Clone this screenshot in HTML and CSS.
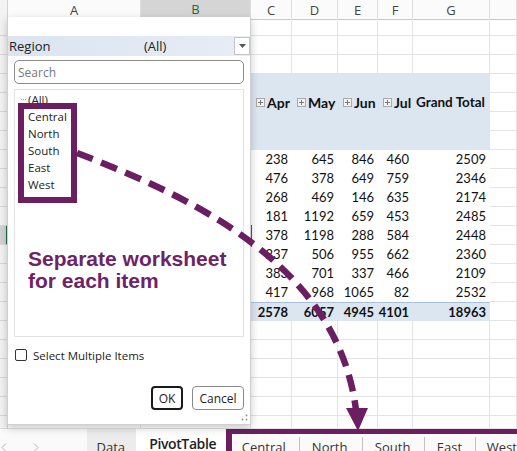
FILE: index.html
```html
<!DOCTYPE html>
<html>
<head>
<meta charset="utf-8">
<title>PivotTable report filter pages</title>
<link rel="stylesheet" href="styles.css">
</head>
<body>
<div class="app">
  <div class="sheet">
    <div class="row colhead">
      <i class="rh"></i><i>A</i><i class="sel">B</i><i>C</i><i>D</i><i>E</i><i>F</i><i>G</i><i></i>
    </div>
    <div class="row"><i class="rh"></i><i></i><i></i><i></i><i></i><i></i><i></i><i></i><i></i></div>
    <div class="row"><i class="rh"></i><i></i><i></i><i></i><i></i><i></i><i></i><i></i><i></i></div>
    <div class="row"><i class="rh"></i><i></i><i></i><i></i><i></i><i></i><i></i><i></i><i></i></div>

    <div class="row"><i class="rh"></i><i></i><i></i><i class="bd"></i><i class="bd"></i><i class="bd"></i><i class="bd"></i><i class="bd"></i><i></i></div>
    <div class="row">
      <i class="rh"></i><i></i><i></i>
      <b class="bd hd"><svg class="pl" viewBox="0 0 9 9"><rect x="0.5" y="0.5" width="8" height="8"/><path d="M2 4.5h5M4.5 2v5"/></svg>Apr</b>
      <b class="bd hd"><svg class="pl" viewBox="0 0 9 9"><rect x="0.5" y="0.5" width="8" height="8"/><path d="M2 4.5h5M4.5 2v5"/></svg>May</b>
      <b class="bd hd"><svg class="pl" viewBox="0 0 9 9"><rect x="0.5" y="0.5" width="8" height="8"/><path d="M2 4.5h5M4.5 2v5"/></svg>Jun</b>
      <b class="bd hd"><svg class="pl" viewBox="0 0 9 9"><rect x="0.5" y="0.5" width="8" height="8"/><path d="M2 4.5h5M4.5 2v5"/></svg>Jul</b>
      <b class="bd hd gt">Grand Total</b>
      <i></i>
    </div>
    <div class="row"><i class="rh"></i><i></i><i></i><i class="bd"></i><i class="bd"></i><i class="bd"></i><i class="bd"></i><i class="bd"></i><i></i></div>
    <div class="row"><i class="rh"></i><i></i><i></i><i class="bd"></i><i class="bd"></i><i class="bd"></i><i class="bd"></i><i class="bd"></i><i></i></div>

    <div class="row"><i class="rh"></i><i></i><i></i><i class="p">238</i><i class="p">645</i><i class="p">846</i><i class="p">460</i><i class="p">2509</i><i></i></div>
    <div class="row"><i class="rh"></i><i></i><i></i><i class="p">476</i><i class="p">378</i><i class="p">649</i><i class="p">759</i><i class="p">2346</i><i></i></div>
    <div class="row"><i class="rh"></i><i></i><i></i><i class="p">268</i><i class="p">469</i><i class="p">146</i><i class="p">635</i><i class="p">2174</i><i></i></div>
    <div class="row"><i class="rh"></i><i></i><i></i><i class="p">181</i><i class="p">1192</i><i class="p">659</i><i class="p">453</i><i class="p">2485</i><i></i></div>
    <div class="row"><i class="rh on"></i><i></i><i></i><i class="p">378</i><i class="p">1198</i><i class="p">288</i><i class="p">584</i><i class="p">2448</i><i></i></div>
    <div class="row"><i class="rh"></i><i></i><i></i><i class="p">237</i><i class="p">506</i><i class="p">955</i><i class="p">662</i><i class="p">2360</i><i></i></div>
    <div class="row"><i class="rh"></i><i></i><i></i><i class="p">383</i><i class="p">701</i><i class="p">337</i><i class="p">466</i><i class="p">2109</i><i></i></div>
    <div class="row"><i class="rh"></i><i></i><i></i><i class="p">417</i><i class="p">968</i><i class="p">1065</i><i class="p">82</i><i class="p">2532</i><i></i></div>
    <div class="row"><i class="rh"></i><i></i><i></i><b class="t">2578</b><b class="t">6057</b><b class="t">4945</b><b class="t">4101</b><b class="t">18963</b><i></i></div>

    <div class="row"><i class="rh"></i><i></i><i></i><i></i><i></i><i></i><i></i><i></i><i></i></div>
    <div class="row"><i class="rh"></i><i></i><i></i><i></i><i></i><i></i><i></i><i></i><i></i></div>
    <div class="row"><i class="rh"></i><i></i><i></i><i></i><i></i><i></i><i></i><i></i><i></i></div>
    <div class="row"><i class="rh"></i><i></i><i></i><i></i><i></i><i></i><i></i><i></i><i></i></div>
    <div class="row"><i class="rh"></i><i></i><i></i><i></i><i></i><i></i><i></i><i></i><i></i></div>
    <div class="row short"><i class="rh"></i><i></i><i></i><i></i><i></i><i></i><i></i><i></i><i></i></div>
  </div>

  <div class="tabs">
    <div class="nav">
      <svg class="chev" viewBox="0 0 6 9"><path d="M5 0.5L1 4.5L5 8.5"/></svg>
      <svg class="chev" viewBox="0 0 6 9"><path d="M1 0.5L5 4.5L1 8.5"/></svg>
    </div>
    <div class="tab data">Data</div>
    <div class="tab active">PivotTable</div>
    <div class="group">
      <div class="tab g1">Central</div>
      <div class="tab g2 sep">North</div>
      <div class="tab g3 sep">South</div>
      <div class="tab g4 sep">East</div>
      <div class="tab g5 sep">West</div>
    </div>
  </div>

  <div class="cursor"></div>

  <div class="dialog">
    <div class="field">
      <span class="fname">Region</span>
      <span class="fval">(All)</span>
      <span class="drop"><svg viewBox="0 0 7 4"><path d="M0 0h7L3.5 4z"/></svg></span>
    </div>
    <div class="search">Search</div>
    <div class="list">
      <div class="item first">(All)</div>
      <div class="item">Central</div>
      <div class="item">North</div>
      <div class="item">South</div>
      <div class="item">East</div>
      <div class="item">West</div>
    </div>
    <label class="check"><span class="box"></span>Select Multiple Items</label>
    <div class="buttons">
      <span class="btn ok">OK</span>
      <span class="btn cancel">Cancel</span>
    </div>
    <svg class="grip" viewBox="0 0 7 7"><circle cx="5.5" cy="1.5" r="0.9"/><circle cx="5.5" cy="5.5" r="0.9"/><circle cx="1.5" cy="5.5" r="0.9"/></svg>
  </div>

  <div class="hl"></div>
  <div class="note">Separate worksheet<br>for each item</div>

  <svg class="arrow" viewBox="0 0 517 451">
    <path class="dash" d="M77 153 C200 200 338 268 356 410"/>
    <polygon class="head" points="346,408 368,408 358,431"/>
  </svg>
</div>
</body>
</html>
```

FILE: styles.css
```css
* { box-sizing: border-box; }
html, body { margin: 0; padding: 0; }
body {
  width: 517px;
  height: 451px;
  overflow: hidden;
  background: #fff;
  font-family: Lato, "Open Sans", sans-serif;
}
.app {
  position: relative;
  width: 517px;
  height: 451px;
  overflow: hidden;
}

/* ---------- sheet grid ---------- */
.sheet { display: flex; flex-direction: column; }
.row {
  display: grid;
  grid-template-columns: 8px 133px 110px 41px 46px 40px 35px 77px 27px;
  height: 19px;
  font-size: 13px;
  color: #111;
}
.row > * {
  font-style: normal;
  font-weight: 400;
  border-right: 1px solid #e4e4e4;
  border-bottom: 1px solid #e4e4e4;
  display: flex;
  align-items: center;
  justify-content: flex-end;
  padding-right: 3px;
  white-space: nowrap;
}
.row.short { height: 13px; }
.row > .rh {
  background: #f3f3f3;
  border-right: 1px solid #d2d2d2;
  border-bottom: 1px solid #dadada;
  padding: 0;
}
.row > .rh.on {
  background: #d3d3d3;
  border-right: 2px solid #217346;
}

.colhead { height: 17px; }
.colhead > * {
  background: #fbfbfb;
  border-right: 1px solid #dedede;
  border-bottom: 1px solid #c8c8c8;
  justify-content: center;
  padding: 0;
  font-family: "Open Sans", sans-serif;
  font-size: 13px;
  color: #444;
}
.colhead > .sel {
  background: #d5d5d5;
  border-bottom: 2px solid #217346;
  color: #1d6b40;
}

.row > .bd {
  background: #dce6f1;
  border-color: #dce6f1;
}
.row > .hd {
  justify-content: flex-start;
  padding: 0 0 0 5px;
  gap: 2px;
  font-weight: 700;
  font-size: 14px;
  color: #111;
}
.row > .gt { padding-left: 3px; font-size: 13.5px; }
.pl { width: 9px; height: 9px; flex: none; }
.pl rect { fill: #f2f2f2; stroke: #a9a9a9; stroke-width: 1; }
.pl path { stroke: #7a7a7a; stroke-width: 1; }

.row > .p {
  background: #fff;
  border-color: #fff;
}
.row > .t {
  background: #dce6f1;
  border-right-color: #dce6f1;
  border-bottom-color: #dce6f1;
  border-top: 1px solid #a8bfdf;
  font-weight: 700;
  color: #111;
}

.cursor {
  position: absolute;
  left: 250px;
  top: 225px;
  width: 2px;
  height: 22px;
  background: #217346;
}

/* ---------- sheet tabs ---------- */
.tabs {
  display: flex;
  height: 22px;
  background: #fafafa;
  font-family: "Open Sans", sans-serif;
  font-size: 13px;
  color: #333;
  line-height: 17px;
}
.nav {
  width: 87px;
  display: flex;
  align-items: flex-start;
  gap: 26px;
  padding: 14px 0 0 1px;
}
.chev { width: 6px; height: 9px; }
.chev path { fill: none; stroke: #b3b3b3; stroke-width: 1; }
.tab { white-space: nowrap; padding-top: 10px; }
.tab.data {
  width: 50px;
  background: #ececec;
  padding-left: 10px;
}
.tab.active {
  width: 90px;
  background: #fff;
  padding: 6px 0 0 13px;
  font-size: 14px;
  line-height: 18px;
  font-weight: 600;
  letter-spacing: -0.4px;
  color: #222;
}
.group {
  flex: 1;
  display: flex;
  border-top: 5px solid #6b1f62;
  border-left: 6px solid #6b1f62;
  background: #fafafa;
}
.group .tab { padding-top: 5px; padding-left: 13px; }
.group .g1 { width: 67px; padding-left: 10px; }
.group .g2 { width: 63px; }
.group .g3 { width: 62px; }
.group .g4 { width: 51px; }
.group .g5 { flex: 1; padding-left: 12px; }
.sep {
  background: linear-gradient(#c4c4c4, #c4c4c4) left 3px / 1px 100% no-repeat;
}

/* ---------- filter dropdown ---------- */
.dialog {
  position: absolute;
  left: 7px;
  top: 17px;
  width: 244px;
  height: 408px;
  background: #fff;
  border: 1px solid #d0d0d0;
  border-top: none;
  box-shadow: 0 3px 8px rgba(0, 0, 0, 0.22);
  display: flex;
  flex-direction: column;
  padding: 19px 6px 0 6px;
  font-family: "Open Sans", sans-serif;
  font-size: 11.5px;
  color: #222;
}
.field {
  margin: 0 -6px;
  height: 20px;
  display: flex;
  align-items: center;
  padding-left: 1px;
  background: linear-gradient(90deg, #dbe4f0, #e7edf6);
  font-size: 13px;
  color: #222;
}
.fname { width: 135px; }
.fval { flex: 1; }
.drop {
  width: 16px;
  height: 18px;
  background: #fff;
  border: 1px solid #c4c4c4;
  display: flex;
  align-items: center;
  justify-content: center;
}
.drop svg { width: 7px; height: 4px; }
.drop path { fill: #555; }

.search {
  margin-top: 4px;
  height: 24px;
  border: 1px solid #8c8c8c;
  border-radius: 5px;
  padding-left: 3px;
  display: flex;
  align-items: center;
  color: #777;
  font-size: 12px;
}
.list {
  margin-top: 5px;
  height: 248px;
  border: 1px solid #e2e2e2;
  padding: 1px 0 0 13px;
  line-height: 17px;
}
.item {
  display: flex;
  align-items: center;
}
.item.first::before {
  content: "";
  width: 5px;
  margin-left: -7px;
  margin-right: 2px;
  border-top: 1px dotted #9a9a9a;
}
.check {
  margin-top: 10px;
  height: 16px;
  display: flex;
  align-items: center;
  gap: 6px;
  padding-left: 1px;
}
.box {
  width: 12px;
  height: 12px;
  border: 1.5px solid #333;
  border-radius: 2px;
}
.buttons {
  margin-top: 23px;
  height: 24px;
  display: flex;
  justify-content: flex-end;
  gap: 9px;
}
.btn {
  display: flex;
  align-items: center;
  justify-content: center;
  border-radius: 4px;
  font-size: 12px;
}
.btn.ok { width: 32px; border: 2px solid #1a1a1a; }
.btn.cancel { width: 52px; border: 1px solid #8a8a8a; }
.grip {
  width: 7px;
  height: 7px;
  align-self: flex-end;
  margin: auto -4px 3px 0;
}
.grip circle { fill: #8a8a8a; }

/* ---------- annotation ---------- */
.hl {
  position: absolute;
  left: 18px;
  top: 103px;
  width: 59px;
  height: 100px;
  border: 6px solid #6b1f62;
}
.note {
  position: absolute;
  left: 28px;
  top: 248px;
  font-family: "Liberation Sans", Arial, sans-serif;
  font-weight: 700;
  font-size: 21px;
  line-height: 22px;
  color: #6d2467;
}
.arrow {
  position: absolute;
  left: 0;
  top: 0;
  width: 517px;
  height: 451px;
  pointer-events: none;
}
.arrow .dash {
  fill: none;
  stroke: #6b1f62;
  stroke-width: 6.5;
  stroke-dasharray: 17 9;
}
.arrow .head { fill: #6b1f62; }
```
